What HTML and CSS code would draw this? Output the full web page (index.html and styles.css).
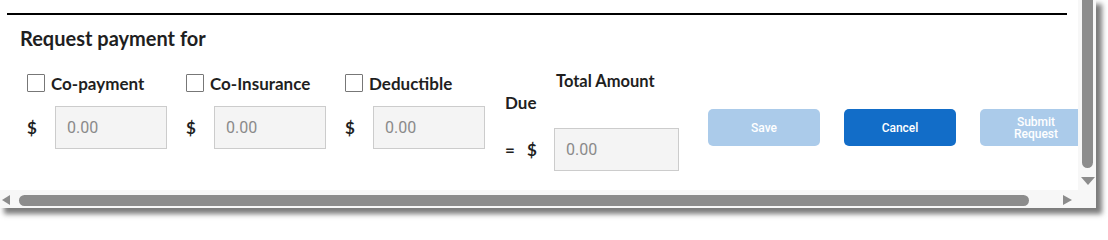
FILE: index.html
```html
<!DOCTYPE html>
<html lang="en">
<head>
<meta charset="utf-8">
<title>Request payment</title>
<link rel="stylesheet" href="styles.css">
</head>
<body>
<div class="frame">
<div class="window">
  <div class="main">
    <div class="content">
      <div class="rule"></div>
      <h2 class="title">Request payment for</h2>
      <div class="form">
        <div class="item">
          <label class="check"><span class="box"></span><span class="check-text">Co-payment</span></label>
          <div class="field"><span class="cur">$</span><input class="amount" type="text" placeholder="0.00" readonly></div>
        </div>
        <div class="item">
          <label class="check"><span class="box"></span><span class="check-text">Co-Insurance</span></label>
          <div class="field"><span class="cur">$</span><input class="amount" type="text" placeholder="0.00" readonly></div>
        </div>
        <div class="item">
          <label class="check"><span class="box"></span><span class="check-text">Deductible</span></label>
          <div class="field"><span class="cur">$</span><input class="amount" type="text" placeholder="0.00" readonly></div>
        </div>
        <div class="total">
          <div class="total-left">
            <span class="due">Due</span>
            <div class="eq"><span class="eq-sign">=</span><span class="cur-sm">$</span></div>
          </div>
          <div class="total-right">
            <span class="total-label">Total Amount</span>
            <input class="amount amount-total" type="text" placeholder="0.00" readonly>
          </div>
        </div>
        <div class="actions">
          <button class="btn btn-light" type="button">Save</button>
          <button class="btn btn-primary" type="button">Cancel</button>
          <button class="btn btn-light btn-two" type="button">Submit<br>Request</button>
        </div>
      </div>
    </div>
    <div class="hscroll">
      <span class="arrow-left"></span>
      <span class="hthumb"></span>
      <span class="arrow-right"></span>
    </div>
  </div>
  <div class="vscroll">
    <span class="vthumb"></span>
    <span class="arrow-down"></span>
  </div>
</div>
</div>
</body>
</html>
```
FILE: styles.css
```css
html, body {
  margin: 0;
  padding: 0;
  background: #ffffff;
  width: 1108px;
  height: 221px;
  overflow: hidden;
}

.frame {
  width: 1108px;
  height: 221px;
}

.window {
  width: 1096px;
  height: 208px;
  display: flex;
  background: #ffffff;
  box-shadow: 5px 5px 5px 1px rgba(80, 80, 80, 0.75);
}

.main {
  width: 1078px;
  height: 208px;
  display: flex;
  flex-direction: column;
}

.content {
  height: 190px;
  overflow: hidden;
  padding-left: 7px;
  box-sizing: border-box;
  font-family: Lato, "Open Sans", sans-serif;
  color: #1f1f1f;
}

.rule {
  margin-top: 13px;
  width: 1060px;
  height: 2px;
  background: #000000;
}

.title {
  margin: 12px 0 0 13px;
  font-size: 20px;
  line-height: 22px;
  font-weight: 700;
  height: 22px;
}

.form {
  display: flex;
  margin: 25px 0 0 20px;
  width: 1200px;
}

.item {
  width: 159px;
  display: flex;
  flex-direction: column;
}

.check {
  display: flex;
  align-items: center;
  height: 18px;
  font-size: 17px;
  font-weight: 700;
}

.box {
  width: 16px;
  height: 16px;
  border: 1px solid #777777;
  border-radius: 1px;
  background: #ffffff;
  margin-right: 6px;
}

.field {
  display: flex;
  align-items: center;
  margin-top: 14px;
}

.cur {
  width: 28px;
  font-size: 17px;
  font-weight: 700;
}

.amount {
  width: 112px;
  height: 43px;
  box-sizing: border-box;
  margin: 0;
  padding: 0 0 0 11px;
  border: 1px solid #cccccc;
  background: #f4f4f4;
  font-family: Roboto, Arial, sans-serif;
  font-size: 16px;
  color: #444444;
  outline: none;
}

.amount::placeholder {
  color: #8a8a8a;
  opacity: 1;
}

.total {
  display: flex;
  margin-left: 1px;
}

.total-left {
  width: 49px;
  display: flex;
  flex-direction: column;
}

.due {
  margin-top: 20px;
  height: 18px;
  line-height: 18px;
  font-size: 17px;
  font-weight: 700;
}

.eq {
  display: flex;
  align-items: center;
  margin-top: 28px;
  height: 18px;
  font-size: 17px;
  font-weight: 700;
}

.eq-sign {
  width: 22px;
}

.total-right {
  display: flex;
  flex-direction: column;
}

.total-label {
  margin: -2px 0 0 2px;
  height: 18px;
  line-height: 18px;
  font-size: 16.5px;
  font-weight: 700;
}

.amount-total {
  width: 125px;
  margin-top: 38px;
}

.actions {
  display: flex;
  gap: 24px;
  margin: 35px 0 0 29px;
}

.btn {
  width: 112px;
  height: 37px;
  border: none;
  border-radius: 5px;
  padding: 0;
  font-family: Roboto, Arial, sans-serif;
  font-size: 12px;
  font-weight: 500;
  color: #ffffff;
  line-height: 12px;
}

.btn-light {
  background: #abcbea;
}

.btn-primary {
  background: #126dc8;
}

.hscroll {
  height: 18px;
  display: flex;
  align-items: center;
  background: #f7f7f7;
  padding-left: 2px;
  padding-top: 2px;
  box-sizing: border-box;
}

.arrow-left {
  width: 0;
  height: 0;
  border-top: 5px solid transparent;
  border-bottom: 5px solid transparent;
  border-right: 8px solid #8c8c8c;
}

.hthumb {
  width: 1010px;
  height: 11px;
  margin-left: 9px;
  border-radius: 6px;
  background: #8c8c8c;
}

.arrow-right {
  width: 0;
  height: 0;
  margin-left: 34px;
  border-top: 5px solid transparent;
  border-bottom: 5px solid transparent;
  border-left: 9px solid #8c8c8c;
}

.vscroll {
  width: 18px;
  height: 208px;
  background: #f7f7f7;
  display: flex;
  flex-direction: column;
}

.vthumb {
  width: 11px;
  height: 168px;
  margin-left: 4px;
  border-radius: 0 0 6px 6px;
  background: #8c8c8c;
}

.arrow-down {
  width: 0;
  height: 0;
  margin: 9px 0 0 3px;
  border-left: 7px solid transparent;
  border-right: 7px solid transparent;
  border-top: 8px solid #8c8c8c;
}
```
